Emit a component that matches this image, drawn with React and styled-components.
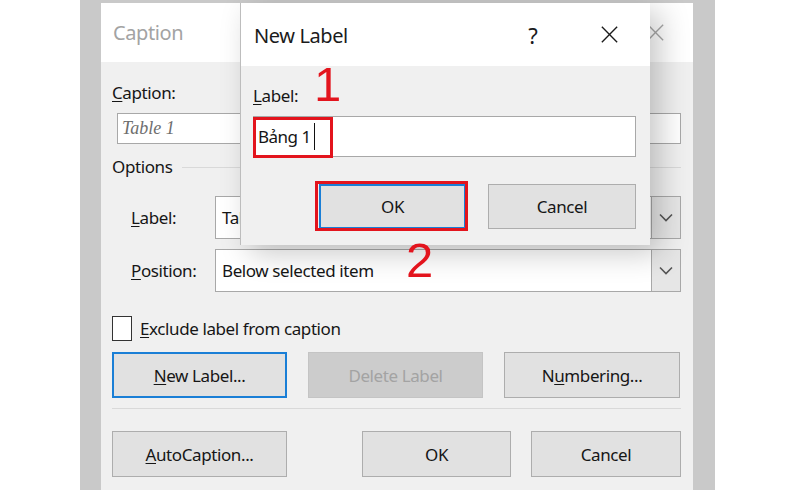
import React from 'react';
import styled, {createGlobalStyle, css} from 'styled-components';

const GlobalStyle = createGlobalStyle`
  html, body {
    margin: 0;
    padding: 0;
    background: #ffffff;
    width: 800px;
    height: 490px;
    overflow: hidden;
  }
  body {
    font-family: "Noto Sans", "Open Sans", sans-serif;
    color: #1a1a1a;
  }
`

const uiFont = css`
  font-family: "Noto Sans", "Open Sans", sans-serif;
  font-size: 17px;
  letter-spacing: -0.4px;
  color: #161616;
`

const Stage = styled.div`
  position: relative;
  display: flex;
  width: 800px;
  height: 490px;
  padding-left: 80px;
  box-sizing: border-box;
`

const GrayEdge = styled.div`
  width: ${p => p.$w}px;
  height: 100%;
  background: #c9c9c9;
`

const Dialog = styled.div`
  width: 592px;
  height: 100%;
  display: flex;
  flex-direction: column;
  border-top: 3px solid #c9c9c9;
  box-sizing: border-box;
  background: #f0f0f0;
`

const TitleBar = styled.div`
  height: ${p => p.$h}px;
  flex: none;
  background: #ffffff;
  display: flex;
  align-items: center;
  padding-left: ${p => p.$pad}px;
  box-sizing: border-box;
`

const Title = styled.div`
  font-family: "Noto Sans", sans-serif;
  font-size: 20px;
  letter-spacing: -0.4px;
  color: ${p => p.$dim ? '#a3a3a3' : '#1b1b1b'};
  flex: 1;
  margin-top: ${p => p.$mt || 0}px;
`

const TitleIcon = styled.div`
  width: ${p => p.$w}px;
  display: flex;
  justify-content: center;
  align-items: center;
  font-size: 22px;
  margin-right: ${p => p.$mr || 0}px;
  color: ${p => p.$color || '#1b1b1b'};
`

const Body = styled.div`
  padding: 0 12px 0 11px;
  display: flex;
  flex-direction: column;
`

const FieldLabel = styled.div`
  ${uiFont};
  line-height: 24px;
  height: 24px;
  margin-top: ${p => p.$mt || 0}px;
  margin-left: ${p => p.$ml || 0}px;
  width: ${p => p.$w ? p.$w + 'px' : 'auto'};
  flex: none;
  u { text-decoration-thickness: 1px; text-underline-offset: 2px; }
`

const TextBox = styled.div`
  height: ${p => p.$h}px;
  margin-top: ${p => p.$mt || 0}px;
  margin-left: ${p => p.$ml || 0}px;
  background: #ffffff;
  border: 1.5px solid #a8a8a8;
  box-sizing: border-box;
  display: flex;
  align-items: center;
  padding-left: 4px;
`

const SampleText = styled.span`
  font-family: "Liberation Serif", serif;
  font-style: italic;
  font-size: 18px;
  color: #6e6e6e;
`

const OptionsRow = styled.div`
  display: flex;
  align-items: center;
  margin-top: 11px;
  gap: 10px;
`

const Rule = styled.div`
  flex: ${p => p.$fixed ? 'none' : 1};
  height: 1px;
  background: #d9d9d9;
  margin-top: ${p => p.$mt || 0}px;
`

const SelectRow = styled.div`
  display: flex;
  align-items: center;
  margin-top: ${p => p.$mt}px;
  padding-left: 19px;
`

const Select = styled.div`
  flex: 1;
  height: 43px;
  margin-left: ${p => p.$ml}px;
  display: flex;
  background: #ffffff;
  border: 1.5px solid #a8a8a8;
  box-sizing: border-box;
`

const SelectValue = styled.div`
  ${uiFont};
  flex: 1;
  display: flex;
  align-items: center;
  padding-left: 6px;
`

const Arrow = styled.div`
  width: 28px;
  background: #e6e6e6;
  border-left: 1.5px solid #a8a8a8;
  display: flex;
  align-items: center;
  justify-content: center;
`

const CheckRow = styled.div`
  display: flex;
  align-items: center;
  margin-top: 24px;
  gap: 8px;
`

const CheckBox = styled.div`
  width: 20px;
  height: 25px;
  border: 1.5px solid #333;
  background: #fff;
  box-sizing: border-box;
`

const ButtonRow = styled.div`
  display: flex;
  margin-top: ${p => p.$mt}px;
  gap: 21px;
  justify-content: ${p => p.$split ? 'space-between' : 'flex-start'};
`

const Button = styled.div`
  ${uiFont};
  width: ${p => p.$w}px;
  height: ${p => p.$h || 46}px;
  flex: none;
  display: flex;
  align-items: center;
  justify-content: center;
  box-sizing: border-box;
  background: ${p => p.$disabled ? '#cccccc' : '#e1e1e1'};
  color: ${p => p.$disabled ? '#a3a3a3' : '#161616'};
  border: ${p => p.$focus ? '2px solid #1a7fd6' : '1.5px solid #adadad'};
  border-color: ${p => p.$disabled ? '#c4c4c4' : undefined};
  u { text-decoration-thickness: 1px; text-underline-offset: 2px; }
`

const Group = styled.div`
  display: flex;
  gap: 20px;
`

/* overlay dialog */
const Popup = styled.div`
  position: absolute;
  left: 240px;
  top: 3px;
  width: 410px;
  height: 242px;
  background: #f0f0f0;
  border-left: 1px solid #bdbdbd;
  box-sizing: border-box;
  box-shadow: 10px 8px 28px rgba(0, 0, 0, 0.22);
  display: flex;
  flex-direction: column;
`

const PopupBody = styled.div`
  padding: 0 14px 0 12px;
  display: flex;
  flex-direction: column;
`

const InputText = styled.span`
  ${uiFont};
  font-size: 17px;
  letter-spacing: -0.5px;
  display: flex;
  align-items: center;
`

const Caret = styled.span`
  width: 1px;
  height: 27px;
  background: #111;
  margin-left: 3px;
`

const PopupButtons = styled.div`
  display: flex;
  justify-content: flex-end;
  gap: 22px;
  margin-top: 27px;
`

const RedBox = styled.div`
  position: absolute;
  left: ${p => p.$x}px;
  top: ${p => p.$y}px;
  width: ${p => p.$w}px;
  height: ${p => p.$h}px;
  border: 3px solid #e3141d;
  box-sizing: border-box;
`

const Mark = styled.div`
  position: absolute;
  left: ${p => p.$x}px;
  top: ${p => p.$y}px;
  font-family: "Liberation Sans", Arial, sans-serif;
  font-size: 49px;
  line-height: 1;
  color: #e3141d;
`

const Chevron = () => (
  <svg width="14" height="9" viewBox="0 0 14 9">
    <path d="M1 1.5 L7 7.5 L13 1.5" fill="none" stroke="#555" strokeWidth="1.6" />
  </svg>
)

const CloseIcon = ({color, size}) => (
  <svg width={size} height={size} viewBox="0 0 20 20">
    <path d="M1 1 L19 19 M19 1 L1 19" stroke={color} strokeWidth="1.6" />
  </svg>
)

export default function App() {
  return (
    <>
      <GlobalStyle />
      <Stage>
        <GrayEdge $w={21} />
        <Dialog>
          <TitleBar $h={59} $pad={12}>
            <Title $dim>Caption</Title>
            <TitleIcon $w={76}><CloseIcon color="#a8a8a8" size={17} /></TitleIcon>
          </TitleBar>
          <Body>
            <FieldLabel $mt={19}><u>C</u>aption:</FieldLabel>
            <TextBox $h={31} $mt={8} $ml={5}><SampleText>Table 1</SampleText></TextBox>
            <OptionsRow>
              <FieldLabel>Options</FieldLabel>
              <Rule />
            </OptionsRow>
            <SelectRow $mt={17}>
              <FieldLabel $w={65}><u>L</u>abel:</FieldLabel>
              <Select $ml={19}>
                <SelectValue>Table</SelectValue>
                <Arrow><Chevron /></Arrow>
              </Select>
            </SelectRow>
            <SelectRow $mt={10}>
              <FieldLabel $w={65}><u>P</u>osition:</FieldLabel>
              <Select $ml={19}>
                <SelectValue>Below selected item</SelectValue>
                <Arrow><Chevron /></Arrow>
              </Select>
            </SelectRow>
            <CheckRow>
              <CheckBox />
              <FieldLabel><u>E</u>xclude label from caption</FieldLabel>
            </CheckRow>
            <ButtonRow $mt={11}>
              <Button $w={175} $focus><u>N</u>ew Label...</Button>
              <Button $w={175} $disabled>Delete Label</Button>
              <Button $w={176}>N<u>u</u>mbering...</Button>
            </ButtonRow>
            <Rule $mt={10} $fixed />
            <ButtonRow $mt={22} $split>
              <Button $w={175}><u>A</u>utoCaption...</Button>
              <Group>
                <Button $w={149}>OK</Button>
                <Button $w={150}>Cancel</Button>
              </Group>
            </ButtonRow>
          </Body>
        </Dialog>
        <GrayEdge $w={22} />

        <Popup>
          <TitleBar $h={63} $pad={13}>
            <Title $mt={2}>New Label</Title>
            <TitleIcon $w={40} $mr={15}>?</TitleIcon>
            <TitleIcon $w={82}><CloseIcon color="#1b1b1b" size={17} /></TitleIcon>
          </TitleBar>
          <PopupBody>
            <FieldLabel $mt={18}><u>L</u>abel:</FieldLabel>
            <TextBox $h={41} $mt={8}>
              <InputText>Bảng 1<Caret /></InputText>
            </TextBox>
            <PopupButtons>
              <Button $w={147} $h={45} $focus>OK</Button>
              <Button $w={148} $h={45}>Cancel</Button>
            </PopupButtons>
          </PopupBody>
        </Popup>

        <RedBox $x={253} $y={117} $w={80} $h={41} />
        <RedBox $x={315} $y={181} $w={153} $h={50} />
        <Mark $x={314} $y={60}>1</Mark>
        <Mark $x={406} $y={236}>2</Mark>
      </Stage>
    </>
  );
}
